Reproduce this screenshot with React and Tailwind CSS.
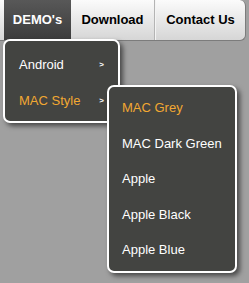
import React from "react";

const subItems = [
  { label: "MAC Grey", active: true },
  { label: "MAC Dark Green" },
  { label: "Apple" },
  { label: "Apple Black" },
  { label: "Apple Blue" },
];

export default function App() {
  return (
    <div
      className="relative w-[249px] h-[283px] overflow-hidden bg-[#a0a0a0]"
      style={{ fontFamily: '"Liberation Sans", Arial, sans-serif' }}
    >
      {/* Top menu bar */}
      <div className="flex h-[41px] w-[246px] pl-[4px] rounded-r-[6px] border-b border-r border-[#7c7c7c] bg-gradient-to-b from-[#fbfbfb] to-[#d6d6d6]">
        <div className="w-[67px] flex items-center justify-center bg-gradient-to-b from-[#585858] to-[#3c3c3c] text-white text-[13px] font-bold">
          DEMO's
        </div>
        <div className="w-[84px] flex items-center justify-center text-black text-[13px] font-bold border-r border-[#b4b4b4]">
          Download
        </div>
        <div className="flex-1 flex items-center justify-center text-black text-[13px] font-bold border-l border-[#f4f4f4]">
          Contact Us
        </div>
      </div>

      {/* First dropdown */}
      <div className="absolute left-[3px] top-[39px] w-[117px] border-2 border-white rounded-[7px] bg-[#434441] pt-[6px] pb-[2px] shadow-[3px_3px_5px_rgba(0,0,0,0.55)]">
        <div className="h-[36px] flex items-center justify-between pl-[14px] pr-[14px] text-white text-[13px]">
          <span>Android</span>
          <span className="text-[8px] font-bold">&gt;</span>
        </div>
        <div className="h-[36px] flex items-center justify-between pl-[14px] pr-[14px] text-[#f2a832] text-[13px]">
          <span>MAC Style</span>
          <span className="text-[8px] font-bold text-white">&gt;</span>
        </div>
      </div>

      {/* Submenu */}
      <div className="absolute left-[107px] top-[85px] w-[130px] border-2 border-white rounded-[7px] bg-[#434441] py-[3px] shadow-[3px_3px_5px_rgba(0,0,0,0.55)]">
        {subItems.map((item) => (
          <div
            key={item.label}
            className={`h-[35.5px] flex items-center pl-[13px] text-[13px] ${
              item.active ? "text-[#f2a832]" : "text-white"
            }`}
          >
            {item.label}
          </div>
        ))}
      </div>
    </div>
  );
}
